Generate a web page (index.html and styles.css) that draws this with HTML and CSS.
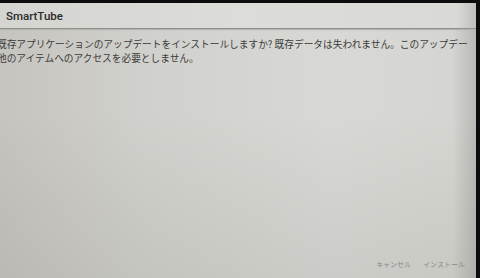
FILE: index.html
```html
<!DOCTYPE html>
<html lang="ja">
    <head>
        <meta charset="utf-8">
        <meta name="viewport" content="width=device-width, initial-scale=1.0">
        <title>SmartTube</title>
        <link rel="stylesheet" href="styles.css">
    </head>
  <body>
    <div class="screen">
      <div class="dialog">
        <header class="titlebar">SmartTube</header>
        <main class="message">
          <p>既存アプリケーションのアップデートをインストールしますか? 既存データは失われません。このアップデー</p>
          <p>他のアイテムへのアクセスを必要としません。</p>
        </main>
        <footer class="actions">
          <span class="btn">キャンセル</span>
          <span class="btn">インストール</span>
        </footer>
      </div>
    </div>
  </body>
</html>
```

FILE: styles.css
```css
html, body{
    margin: 0;
    padding: 0;
    background-color: #0c0c0c;
}
.screen{
    width: 480px;
    height: 278px;
    box-sizing: border-box;
    padding-top: 3px;
    padding-right: 4px;
    background-color: #0c0c0c;
}
.dialog{
    height: 100%;
    display: flex;
    flex-direction: column;
    background:
        linear-gradient(180deg, rgba(0,0,0,0) 40%, rgba(60,55,45,0.08) 100%),
        linear-gradient(90deg, #c6c4bf 0%, #d0d0cc 30%, #d8d8d5 70%, #d5d5d1 95%, #b9b8b4 100%);
    overflow: hidden;
}
.titlebar{
    height: 25px;
    display: flex;
    align-items: center;
    padding-left: 6px;
    font-family: Roboto, "Noto Sans", sans-serif;
    font-weight: 500;
    font-size: 11.5px;
    color: #2b2b2b;
    background: linear-gradient(90deg, #d4d4d0 0%, #dcdcd9 50%, #d9d9d6 96%, #c0bfbb 100%);
    border-bottom: 1px solid #8f8f8c;
    box-shadow: 0 1px 1px #b5b4b0;
}
.message{
    padding-top: 8px;
    margin-left: -3px;
    font-family: "Noto Sans CJK JP", "Noto Sans", sans-serif;
    font-size: 9.7px;
    line-height: 14px;
    color: #3c3c3a;
    white-space: nowrap;
}
.message p{
    margin: 0;
}
.actions{
    margin-top: auto;
    display: flex;
    justify-content: flex-end;
    gap: 12px;
    padding-right: 11px;
    padding-bottom: 9px;
}
.btn{
    font-family: "Noto Sans CJK JP", sans-serif;
    font-size: 7px;
    line-height: 10px;
    color: #8a8a87;
}
```
